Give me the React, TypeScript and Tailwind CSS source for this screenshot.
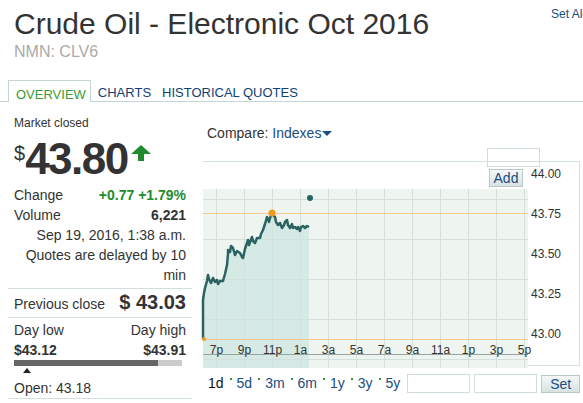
import React from "react";

const linePts: [number, number][] = [
  [0, 177], [0, 138], [1, 131], [2, 126], [4, 119], [5, 113], [6, 117], [8, 121], [10, 116], [12, 120],
  [14, 118], [15, 122], [17, 119], [20, 119], [22, 112], [24, 103], [25, 92], [25, 88], [27, 90],
  [28, 84], [30, 86], [32, 93], [34, 89], [37, 91], [39, 95], [40, 96], [42, 87], [45, 78], [46, 83],
  [49, 75], [50, 79], [52, 81], [54, 76], [57, 76], [58, 72], [60, 68], [62, 62], [64, 55], [66, 60],
  [67, 56], [69, 51], [71, 54], [72, 55], [73, 60], [75, 63], [77, 61], [79, 66], [81, 63], [82, 60],
  [84, 58], [85, 63], [87, 66], [89, 62], [90, 66], [92, 65], [94, 67], [95, 65], [97, 69], [98, 65],
  [100, 64], [102, 66], [104, 64], [106, 65],
];

const xLabels = ["7p", "9p", "11p", "1a", "3a", "5a", "7a", "9a", "11a", "1p", "3p", "5p"];
const yLabels = ["44.00", "43.75", "43.50", "43.25", "43.00"];
const periods = ["1d", "5d", "3m", "6m", "1y", "3y", "5y"];

const PriceChart = () => {
  const line = linePts.map(([x, y], i) => `${i ? "L" : "M"}${x} ${y}`).join(" ");
  const area = `${line} L106 206 L0 206 Z`;
  return (
    <svg width="376" height="206" className="block overflow-visible">
      <rect x="0" y="27" width="325" height="179" fill="#eef5f0" />
      <path d={area} fill="#d5e9e5" />
      {[37, 77, 117, 157, 197].map((y) => (
        <line key={y} x1="0" x2="325" y1={y + 0.5} y2={y + 0.5} stroke="#d3e0dc" />
      ))}
      {xLabels.map((_, i) => (
        <line key={i} x1={13.5 + 28 * i} x2={13.5 + 28 * i} y1="27" y2="206" stroke="#d3e0dc" />
      ))}
      <line x1="0" x2="325" y1="51.5" y2="51.5" stroke="#f5c890" />
      <line x1="0" x2="325" y1="177.5" y2="177.5" stroke="#f5c890" />
      <line x1="0" x2="325" y1="192.5" y2="192.5" stroke="#9aa3a0" />
      {xLabels.map((t, i) => (
        <text key={t + i} x={13.5 + 28 * i} y="192" textAnchor="middle" fontSize="12" fill="#333" fontFamily="Liberation Sans, Arial, sans-serif">
          {t}
        </text>
      ))}
      <path d={line} fill="none" stroke="#2b6262" strokeWidth="2.5" strokeLinejoin="round" />
      <circle cx="69" cy="51" r="3.5" fill="#f09a20" />
      <circle cx="1" cy="177" r="2" fill="#f09a20" />
      <circle cx="107" cy="36" r="3" fill="#2b6262" />
      {yLabels.map((t, i) => (
        <text key={t} x="328" y={15.5 + 40 * i} fontSize="12" fill="#333" fontFamily="Liberation Sans, Arial, sans-serif">
          {t}
        </text>
      ))}
    </svg>
  );
};

export default function App() {
  return (
    <div className="w-[583px] h-[403px] overflow-hidden bg-white text-[#333] font-['Liberation_Sans',Arial,sans-serif]">
      {/* Header */}
      <div className="flex pt-[7px] pl-[14px]">
        <div className="w-[537px] shrink-0">
          <h1 className="text-[30px] leading-[34px] text-[#333] whitespace-nowrap">Crude Oil - Electronic Oct 2016</h1>
          <div className="mt-[1px] text-[16px] leading-[20px] text-[#aaa]">NMN: CLV6</div>
        </div>
        <a className="text-[12px] leading-[14px] text-[#1a4d80] whitespace-nowrap">Set Alert</a>
      </div>

      {/* Tabs */}
      <div className="mt-[18px] flex items-end h-[22px] pl-[8px] border-b border-[#c5d4d4] text-[13px] leading-[15px]">
        <div className="h-[22px] -mb-px border border-b-0 border-[#c5d4d4] bg-white pl-[7px] pr-[4px] pt-[6px] text-[#3c9a35]">OVERVIEW</div>
        <div className="ml-[7px] pb-[1px] text-[#0f3f75]">CHARTS</div>
        <div className="ml-[11px] pb-[1px] text-[#0f3f75]">HISTORICAL QUOTES</div>
      </div>

      <div className="flex">
        {/* Left quote column */}
        <div className="ml-[8px] w-[184px] shrink-0">
          <div className="px-[6px]">
            <div className="mt-[14px] text-[12px] leading-[14px]">Market closed</div>
            <div className="mt-[9px] flex items-start h-[42px]">
              <span className="mt-[4px] text-[20px] leading-[20px]">$</span>
              <span className="text-[44px] leading-[40px] font-bold tracking-[-1.5px]">43.80</span>
              <svg width="20" height="16" viewBox="0 0 20 16" className="ml-[3px] mt-[6px]">
                <path d="M10 0 L20 9 L13 9 L13 16 L7 16 L7 9 L0 9 Z" fill="#1e8c2c" />
              </svg>
            </div>
            <div className="mt-[4px] text-[14px] leading-[20px]">
              <div className="flex justify-between">
                <span>Change</span>
                <span className="font-bold text-[#1e8c2c]">+0.77 +1.79%</span>
              </div>
              <div className="flex justify-between">
                <span>Volume</span>
                <span className="font-bold">6,221</span>
              </div>
              <div className="text-right">Sep 19, 2016, 1:38 a.m.</div>
              <div className="text-right pb-[3px]">Quotes are delayed by 10 min</div>
            </div>
          </div>
          <div className="border-t border-[#d3dfdf] px-[6px] py-[3px] flex justify-between items-baseline text-[14px] leading-[20px]">
            <span>Previous close</span>
            <span className="text-[20px] font-bold">$ 43.03</span>
          </div>
          <div className="border-t border-[#d3dfdf] px-[6px] pt-[2px] text-[14px] leading-[20px]">
            <div className="flex justify-between">
              <span>Day low</span>
              <span>Day high</span>
            </div>
            <div className="flex justify-between font-bold">
              <span>$43.12</span>
              <span>$43.91</span>
            </div>
            <div className="flex w-[168px] h-[6px]">
              <div className="w-[144px] bg-[#666]" />
              <div className="flex-1 bg-[#ccc]" />
            </div>
            <div className="ml-[9px] mt-[2px] w-0 h-0 border-x-[4px] border-x-transparent border-b-[5px] border-b-[#222]" />
            <div className="mt-[5px]">Open: 43.18</div>
          </div>
          <div className="border-t border-[#d3dfdf]" />
        </div>

        {/* Chart column */}
        <div className="ml-[11px] w-[377px] shrink-0">
          <div className="mt-[21px] pl-[4px] text-[14px] leading-[20px] flex items-center">
            <span>Compare:&nbsp;</span>
            <span className="text-[#1a4d80]">Indexes</span>
            <span className="ml-[1px] w-0 h-0 border-x-[5px] border-x-transparent border-t-[5px] border-t-[#1a4d80]" />
          </div>
          <div className="relative mt-[18px] h-[205px] border-t border-r border-b border-[#d3dfdf]">
            <PriceChart />
            <input className="absolute left-[284px] top-[-14px] w-[53px] h-[19px] border border-[#cfdcdc] bg-transparent outline-none" />
            <button className="absolute left-[286px] top-[7px] w-[34px] h-[18px] border border-[#b9c8c8] bg-gradient-to-b from-[#f3f7f7] to-[#d9e3e3] text-[14px] leading-[16px] text-[#1a4d80]">
              Add
            </button>
          </div>
          <div className="mt-[8px] flex items-center h-[19px] text-[14px] leading-[19px]">
            {periods.map((p, i) => (
              <React.Fragment key={p}>
                {i > 0 && <span className="ml-[6px] mr-[5px] mb-[10px] w-[2px] h-[2px] bg-[#2f9a3a]" />}
                <span className={i === 0 ? "ml-[5px] text-[#111]" : "text-[#1a4d80]"}>{p}</span>
              </React.Fragment>
            ))}
            <input className="ml-[7px] w-[63px] h-[19px] border border-[#cfdcdc] outline-none" />
            <input className="ml-[4px] w-[63px] h-[19px] border border-[#cfdcdc] outline-none" />
            <button className="ml-[4px] w-[39px] h-[18px] border border-[#b9c8c8] bg-gradient-to-b from-[#f3f7f7] to-[#d9e3e3] text-[14px] leading-[16px] text-[#1a4d80]">
              Set
            </button>
          </div>
        </div>
      </div>
    </div>
  );
}
